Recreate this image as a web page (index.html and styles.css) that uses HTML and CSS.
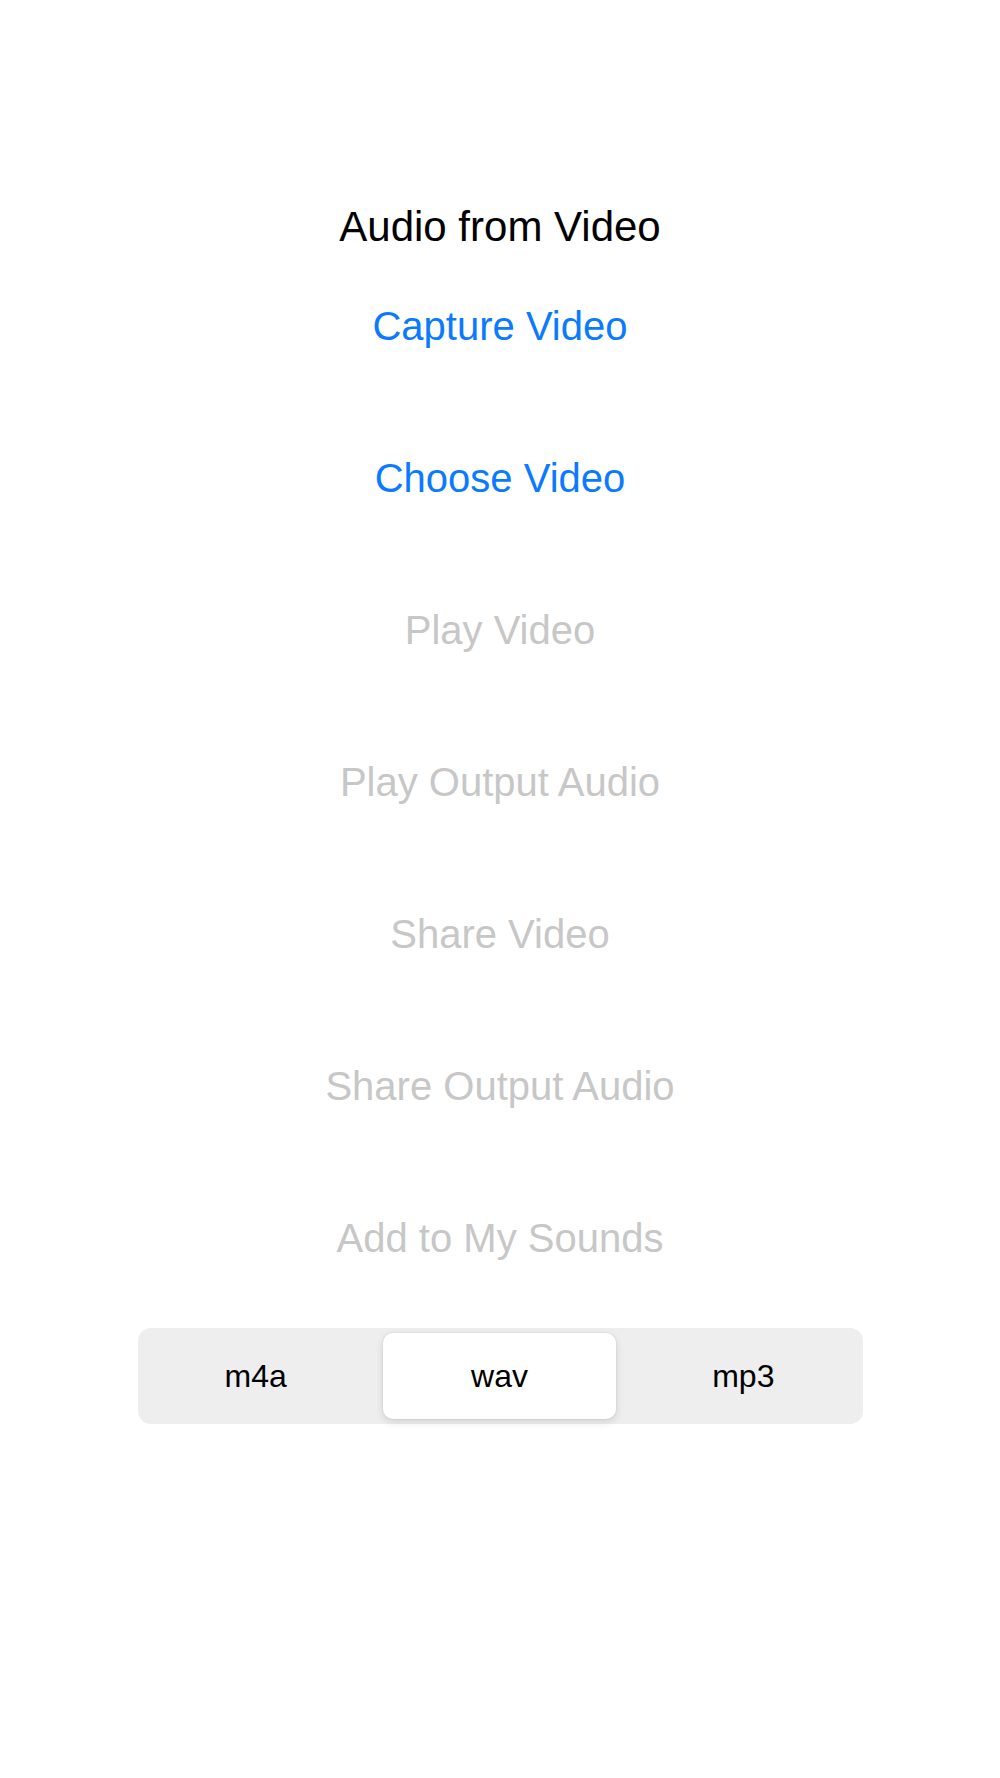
FILE: index.html
```html
<!DOCTYPE html>
<html lang="en">
<head>
<meta charset="utf-8">
<title>Audio from Video</title>
<link rel="stylesheet" href="styles.css">
</head>
<body>
<main class="screen">
  <h1 class="title">Audio from Video</h1>
  <div class="actions">
    <button class="action action-enabled">Capture Video</button>
    <button class="action action-enabled">Choose Video</button>
    <button class="action action-disabled">Play Video</button>
    <button class="action action-disabled">Play Output Audio</button>
    <button class="action action-disabled">Share Video</button>
    <button class="action action-disabled">Share Output Audio</button>
    <button class="action action-disabled">Add to My Sounds</button>
  </div>
  <div class="segmented">
    <div class="segment segment-first">m4a</div>
    <div class="segment segment-selected">wav</div>
    <div class="segment segment-last">mp3</div>
  </div>
</main>
</body>
</html>
```

FILE: styles.css
```css
html, body {
  margin: 0;
  padding: 0;
  background: #ffffff;
}

body {
  font-family: "Liberation Sans", Arial, sans-serif;
  width: 1000px;
  height: 1778px;
  overflow: hidden;
}

.screen {
  display: flex;
  flex-direction: column;
  align-items: center;
  padding-top: 202px;
}

.title {
  margin: 0;
  font-size: 42px;
  font-weight: 400;
  line-height: 50px;
  color: #000000;
}

.actions {
  display: flex;
  flex-direction: column;
  align-items: center;
  gap: 92px;
  margin-top: 44px;
}

.action {
  border: none;
  background: none;
  padding: 0;
  font-family: inherit;
  font-size: 40px;
  line-height: 60px;
  height: 60px;
}

.action-enabled {
  color: #0a7aff;
}

.action-disabled {
  color: #c7c7c7;
}

.segmented {
  margin-top: 60px;
  width: 725px;
  height: 96px;
  box-sizing: border-box;
  padding: 5px;
  background: #eeeeef;
  border-radius: 13px;
  display: grid;
  grid-template-columns: 1fr 1fr 1fr;
  align-items: stretch;
}

.segment {
  display: flex;
  align-items: center;
  justify-content: center;
  font-size: 32px;
  color: #000000;
  border-radius: 10px;
}

.segment-first {
  padding-right: 12px;
}

.segment-last {
  padding-left: 10px;
}

.segment-selected {
  background: #ffffff;
  margin: 0 3px 0 2px;
  box-shadow: 0 3px 8px rgba(0, 0, 0, 0.12), 0 0 0 1px rgba(0, 0, 0, 0.03);
}
```
